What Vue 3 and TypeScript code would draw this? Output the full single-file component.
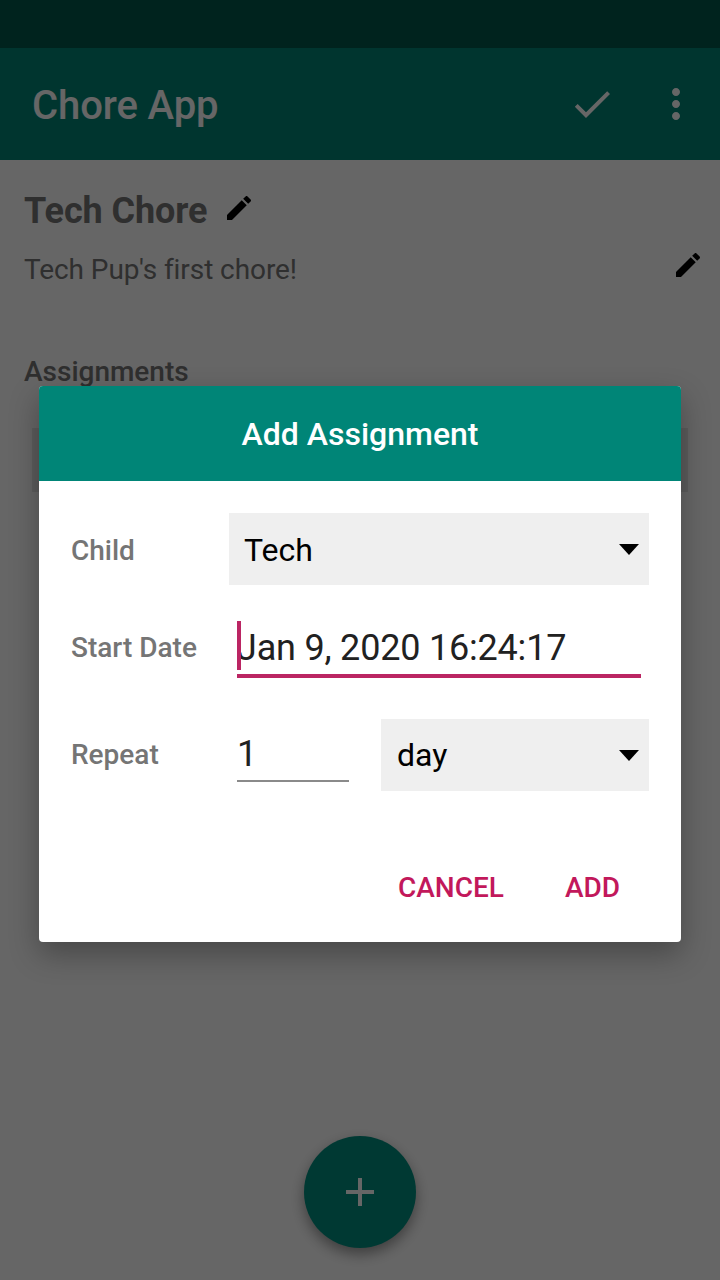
<script setup lang="ts">
const editPath =
  'M3 17.25V21h3.75L17.81 9.94l-3.75-3.75L3 17.25zM20.71 7.04c.39-.39.39-1.02 0-1.41l-2.34-2.34c-.39-.39-1.02-.39-1.41 0l-1.83 1.83 3.75 3.75 1.83-1.83z'
</script>

<template>
  <div class="page">
    <div class="status-bar"></div>
    <header class="app-bar">
      <span class="app-title">Chore App</span>
      <svg class="action check" viewBox="0 0 24 24"><path d="M9 16.17L4.83 12l-1.42 1.41L9 19 21 7l-1.41-1.41z" /></svg>
      <svg class="action more" viewBox="0 0 24 24">
        <path d="M12 8c1.1 0 2-.9 2-2s-.9-2-2-2-2 .9-2 2 .9 2 2 2zm0 2c-1.1 0-2 .9-2 2s.9 2 2 2 2-.9 2-2-.9-2-2-2zm0 6c-1.1 0-2 .9-2 2s.9 2 2 2 2-.9 2-2-.9-2-2-2z" />
      </svg>
    </header>

    <main class="content">
      <div class="title-row">
        <h1 class="chore-name">Tech Chore</h1>
        <svg class="edit edit-title" viewBox="0 0 24 24"><path :d="editPath" /></svg>
      </div>
      <div class="desc-row">
        <p class="chore-desc">Tech Pup's first chore!</p>
        <svg class="edit edit-desc" viewBox="0 0 24 24"><path :d="editPath" /></svg>
      </div>
      <h2 class="section-title">Assignments</h2>
      <div class="assignment-card"></div>
    </main>

    <button type="button" class="fab">
      <svg viewBox="0 0 24 24"><path d="M19 13h-6v6h-2v-6H5v-2h6V5h2v6h6v2z" /></svg>
    </button>

    <div class="scrim"></div>

    <div class="dialog">
      <div class="dialog-header">Add Assignment</div>
      <div class="dialog-body">
        <div class="row row-child">
          <label class="row-label">Child</label>
          <div class="select select-wide">
            <span>Tech</span>
            <i class="arrow"></i>
          </div>
        </div>
        <div class="row row-date">
          <label class="row-label">Start Date</label>
          <div class="date-input">
            <i class="caret"></i>
            <span>Jan 9, 2020 16:24:17</span>
          </div>
        </div>
        <div class="row row-repeat">
          <label class="row-label">Repeat</label>
          <div class="count-input">1</div>
          <div class="select select-unit">
            <span>day</span>
            <i class="arrow"></i>
          </div>
        </div>
      </div>
      <div class="dialog-actions">
        <button type="button" class="text-btn">CANCEL</button>
        <button type="button" class="text-btn">ADD</button>
      </div>
    </div>
  </div>
</template>

<style>
html,
body {
  margin: 0;
  padding: 0;
}
</style>

<style scoped>
.page {
  position: relative;
  width: 720px;
  height: 1280px;
  overflow: hidden;
  background: #fff;
  font-family: Roboto, 'Liberation Sans', sans-serif;
}

.status-bar {
  height: 48px;
  background: #00574b;
}

.app-bar {
  display: flex;
  align-items: center;
  height: 112px;
  padding: 0 20px 0 32px;
  background: #008577;
  color: #fff;
}

.app-title {
  flex: 1;
  padding-top: 2px;
  font-size: 40px;
  font-weight: 500;
  letter-spacing: -0.1px;
}

.action {
  width: 48px;
  height: 48px;
  fill: #fff;
}

.more {
  margin-left: 36px;
}

.content {
  padding: 0 24px;
}

.title-row {
  display: flex;
  align-items: center;
  gap: 16px;
  height: 48px;
  margin-top: 27px;
}

.chore-name {
  margin: 0;
  font-size: 36px;
  font-weight: 700;
  letter-spacing: -0.1px;
  color: #757575;
}

.edit {
  width: 32px;
  height: 32px;
  fill: #000;
}

.edit-title {
  margin-bottom: 6px;
}

.edit-desc {
  margin-right: -8px;
  margin-bottom: 8px;
}

.desc-row {
  display: flex;
  align-items: center;
  justify-content: space-between;
  height: 40px;
  margin-top: 14px;
}

.chore-desc {
  margin: 0;
  font-size: 28px;
  letter-spacing: -0.08px;
  color: #757575;
}

.section-title {
  margin: 63px 0 0;
  font-size: 28px;
  font-weight: 500;
  line-height: 40px;
  color: #757575;
}

.assignment-card {
  height: 64px;
  margin: 36px 8px 0;
  background: #e6e6e6;
}

.fab {
  position: absolute;
  left: 304px;
  top: 1136px;
  display: flex;
  align-items: center;
  justify-content: center;
  width: 112px;
  height: 112px;
  padding: 0;
  border: none;
  border-radius: 50%;
  background: #008f80;
  box-shadow: 0 6px 14px rgba(0, 0, 0, 0.4);
}

.fab svg {
  width: 48px;
  height: 48px;
  fill: #fff;
}

.scrim {
  position: absolute;
  inset: 0;
  background: rgba(0, 0, 0, 0.6);
}

.dialog {
  position: absolute;
  left: 39px;
  top: 386px;
  width: 642px;
  height: 556px;
  border-radius: 4px;
  overflow: hidden;
  background: #fff;
  box-shadow: 0 12px 30px rgba(0, 0, 0, 0.3);
}

.dialog-header {
  display: flex;
  align-items: center;
  justify-content: center;
  height: 95px;
  background: #008577;
  color: #fff;
  font-size: 32px;
  font-weight: 500;
}

.dialog-body {
  padding: 32px 32px 0;
}

.row {
  display: flex;
  align-items: center;
  height: 72px;
}

.row-date {
  margin-top: 26px;
}

.row-repeat {
  margin-top: 36px;
}

.row-label {
  flex: 0 0 158px;
  font-size: 28px;
  font-weight: 500;
  color: #757575;
}

.row-child .row-label {
  margin-top: 2px;
}

.row-repeat .row-label {
  margin-bottom: 2px;
}

.select {
  display: flex;
  align-items: center;
  justify-content: space-between;
  box-sizing: border-box;
  height: 72px;
  padding: 0 10px 0 16px;
  background: #efefef;
  color: #000;
  font-size: 32px;
}

.select-wide {
  width: 420px;
  padding-left: 15px;
}

.select-wide span {
  margin-top: 2px;
}

.select-unit {
  width: 268px;
  margin-left: 32px;
}

.arrow {
  width: 0;
  height: 0;
  border-left: 10px solid transparent;
  border-right: 10px solid transparent;
  border-top: 11px solid #000;
}

.date-input {
  position: relative;
  box-sizing: border-box;
  width: 404px;
  height: 62px;
  margin-left: 8px;
  border-bottom: 4px solid #bb2563;
  color: #212121;
  font-size: 36px;
  letter-spacing: -0.2px;
  line-height: 64px;
}

.caret {
  position: absolute;
  left: 0;
  top: 5px;
  width: 4px;
  height: 49px;
  background: #bb2563;
}

.count-input {
  box-sizing: border-box;
  width: 112px;
  height: 54px;
  margin-left: 8px;
  border-bottom: 2px solid #8a8a8a;
  color: #212121;
  font-size: 36px;
  line-height: 52px;
}

.dialog-actions {
  display: flex;
  justify-content: flex-end;
  gap: 61px;
  margin-top: 77px;
  padding-right: 61px;
}

.text-btn {
  padding: 0;
  border: none;
  background: none;
  color: #c2185b;
  font-family: inherit;
  font-size: 28px;
  font-weight: 500;
  line-height: 40px;
}
</style>
